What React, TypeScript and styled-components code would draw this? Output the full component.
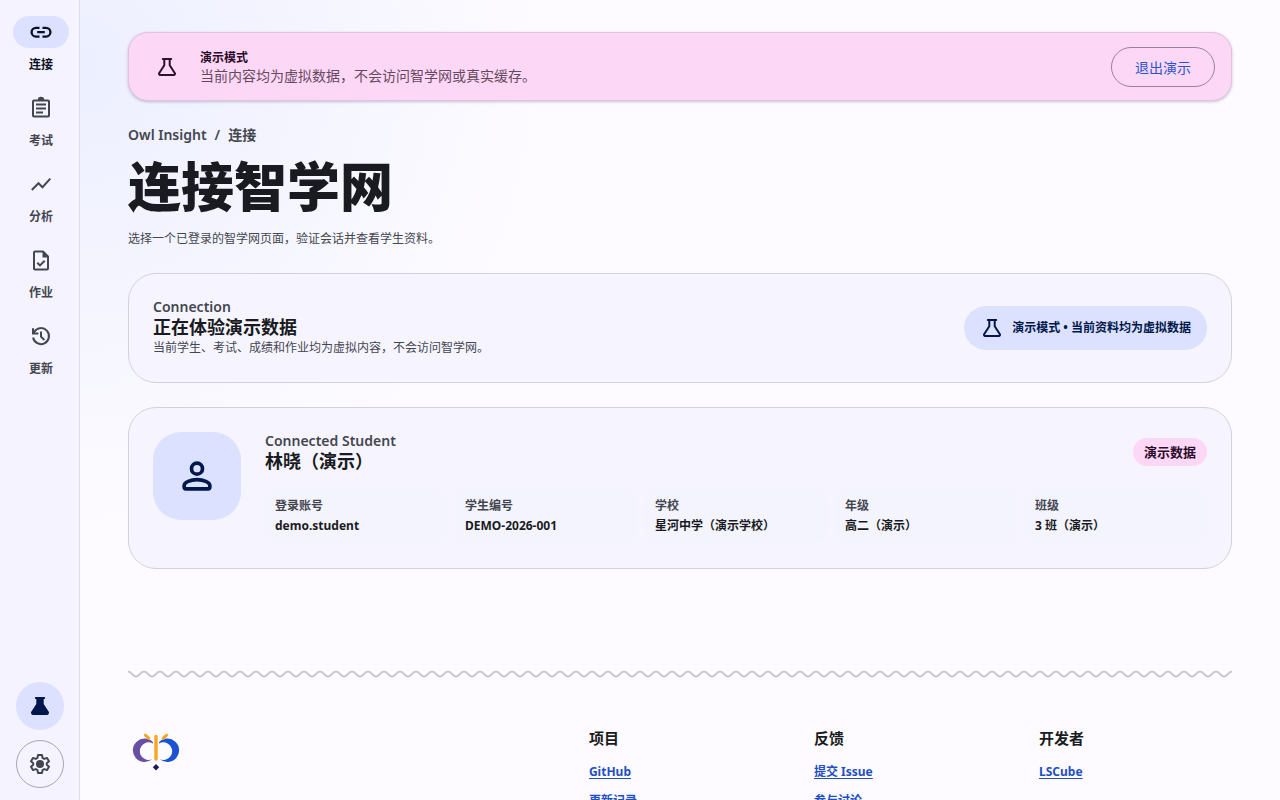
import React from 'react';
import styled, { createGlobalStyle, css } from 'styled-components';

const GlobalStyle = createGlobalStyle`
  *, *::before, *::after { box-sizing: border-box; }
  body {
    margin: 0;
    background: #fdfbff;
    color: #1a1b21;
    font-family: "Noto Sans", "Noto Sans CJK SC", sans-serif;
    font-size: 14px;
    line-height: 20px;
  }
  h1, h2, h3, p, dl, dd, ul { margin: 0; padding: 0; }
  button { font-family: inherit; cursor: pointer; }
`;

const Shell = styled.div`
  display: flex;
  height: 100vh;
  background:
    radial-gradient(circle at 80px 64px, #ecefff 0, rgba(236, 239, 255, 0) 460px),
    #fdfbff;
`;

const Sidebar = styled.aside`
  display: flex;
  flex: none;
  flex-direction: column;
  justify-content: space-between;
  width: 80px;
  padding: 16px 0 12px;
  background: #f4f3ff;
  border-right: 1px solid #dedfee;
`;

const Nav = styled.nav`
  display: flex;
  flex-direction: column;
  gap: 18px;
  padding-left: 13px;
`;

const NavPill = styled.span<{ $active?: boolean }>`
  display: grid;
  place-items: center;
  width: 56px;
  height: 32px;
  border-radius: 16px;
  background: ${(p) => (p.$active ? '#dbe1ff' : 'transparent')};
`;

const NavItem = styled.a<{ $active?: boolean }>`
  display: flex;
  flex-direction: column;
  align-items: center;
  gap: 8px;
  width: 56px;
  color: ${(p) => (p.$active ? '#0c1024' : '#44464f')};
  font-size: 12px;
  font-weight: 700;
  line-height: 18px;
  text-decoration: none;
`;

const Tools = styled.div`
  display: flex;
  flex-direction: column;
  gap: 10px;
  padding-left: 16px;
`;

const RoundButton = styled.button<{ $filled?: boolean }>`
  display: grid;
  place-items: center;
  width: 48px;
  height: 48px;
  padding: 0;
  border-radius: 50%;
  ${(p) =>
    p.$filled
      ? css`
          border: 0;
          background: #dbe1ff;
          color: #00174b;
        `
      : css`
          border: 1px solid #a6a7b2;
          background: transparent;
          color: #44464f;
        `}
`;

const Main = styled.main`
  flex: 1;
  min-width: 0;
  padding: 32px 48px;
  overflow-y: auto;
  scrollbar-width: none;
`;

const Banner = styled.section`
  display: flex;
  align-items: center;
  gap: 21px;
  min-height: 69px;
  padding: 12px 16px 12px 26px;
  background: #fdd8f6;
  border: 1px solid #e0c3df;
  border-radius: 20px;
  box-shadow: 0 1px 3px rgba(40, 30, 70, 0.25);
  color: #2c122b;
`;

const BannerText = styled.div`
  flex: 1;
  font-size: 14px;
  line-height: 18px;
  color: #66485f;
`;

const BannerTitle = styled.strong`
  display: block;
  color: #2c0b2b;
  font-size: 12px;
`;

const ExitButton = styled.button`
  height: 40px;
  padding: 0 23px;
  border: 1px solid #9b7f9f;
  border-radius: 20px;
  background: transparent;
  color: #2b55d0;
  font-size: 14px;
`;

const Crumbs = styled.p`
  display: flex;
  gap: 8px;
  margin-top: 24px;
  color: #44464f;
  font-size: 14px;
  font-weight: 600;
`;

const Title = styled.h1`
  margin-top: 10px;
  font-size: 53px;
  font-weight: 800;
  line-height: 64px;
`;

const Lead = styled.p`
  margin-top: 10px;
  color: #44464f;
  font-size: 12px;
`;

const Card = styled.section`
  display: flex;
  gap: 24px;
  margin-top: 24px;
  padding: 24px;
  background: #f6f5ff;
  border: 1px solid #d2d2de;
  border-radius: 28px;
`;

const StatusCard = styled(Card)`
  align-items: center;
  justify-content: space-between;
`;

const Eyebrow = styled.p`
  color: #44464f;
  font-size: 14px;
  font-weight: 600;
  line-height: 18px;
`;

const CardTitle = styled.h2`
  font-size: 18px;
  line-height: 22px;
`;

const Note = styled.p`
  color: #44464f;
  font-size: 12px;
  line-height: 20px;
`;

const StatusChip = styled.span`
  display: flex;
  align-items: center;
  gap: 8px;
  height: 44px;
  padding: 0 16px;
  border-radius: 22px;
  background: #dbe1ff;
  color: #00174b;
  font-size: 12px;
  font-weight: 700;
`;

const Avatar = styled.div`
  display: grid;
  flex: none;
  place-items: center;
  width: 88px;
  height: 88px;
  border-radius: 28px;
  background: #dbe1ff;
  color: #00174b;
`;

const Profile = styled.div`
  flex: 1;
  min-width: 0;
`;

const ProfileHead = styled.div`
  display: flex;
  align-items: center;
  justify-content: space-between;
`;

const DemoTag = styled.span`
  padding: 4px 11px;
  border-radius: 14px;
  background: #fdd8f6;
  color: #2c0b2b;
  font-size: 13px;
  font-weight: 700;
  line-height: 20px;
`;

const Facts = styled.dl`
  display: grid;
  grid-template-columns: repeat(5, 1fr);
  gap: 8px;
  margin-top: 16px;
`;

const Fact = styled.div`
  padding: 8px 10px;
  border-radius: 16px;
  background: #f4f4ff;
  font-size: 12px;
  font-weight: 700;
  line-height: 20px;
`;

const FactLabel = styled.dt`
  color: #44464f;
`;

const Footer = styled.footer`
  margin-top: 101px;
`;

const Wave = styled.svg`
  display: block;
  width: 100%;
  height: 8px;
`;

const FooterGrid = styled.div`
  display: grid;
  grid-template-columns: 20fr 9fr 9fr 9fr;
  gap: 32px;
  padding-top: 48px;
`;

const FooterHeading = styled.h3`
  font-size: 15px;
  line-height: 24px;
`;

const FooterLinks = styled.ul`
  display: flex;
  flex-direction: column;
  gap: 8px;
  margin-top: 11px;
  list-style: none;
`;

const FooterLink = styled.a`
  color: #1f4fc4;
  font-size: 12px;
  font-weight: 700;
  line-height: 20px;
  text-underline-offset: 2px;
`;

const LogoLink = styled.a`
  display: block;
  width: 56px;
  height: 56px;
`;

type IconProps = { size?: number; children: React.ReactNode; width?: number };

const Icon = ({ size = 24, width = 2, children }: IconProps) => (
  <svg
    width={size}
    height={size}
    viewBox="0 0 24 24"
    fill="none"
    stroke="currentColor"
    strokeWidth={width}
    strokeLinejoin="round"
    aria-hidden="true"
  >
    {children}
  </svg>
);

const LinkIcon = () => (
  <Icon width={2.3}>
    <path d="M10.500 7.800H7a4.400 4.400 0 0 0 0 8.800h3.500M13.500 7.800H17a4.400 4.400 0 0 1 0 8.800h-3.500M8.200 12.200h7.600" />
  </Icon>
);

const ExamIcon = () => (
  <Icon>
    <rect x="4" y="4.500" width="16" height="16" rx="1" />
    <path d="M7 8.500h10M7 12.500h10M7 16.500h7" />
    <path d="M8.800 4a3.200 3.200 0 0 1 6.400 0z" fill="currentColor" stroke="none" />
  </Icon>
);

const TrendIcon = () => (
  <Icon>
    <path d="M2.800 18l6.700-6.800 4 4L21.300 6.600" strokeLinejoin="miter" />
  </Icon>
);

const TaskIcon = () => (
  <Icon>
    <path d="M14 3.500H6a1 1 0 0 0-1 1v16a1 1 0 0 0 1 1h12a1 1 0 0 0 1-1V8.500z" />
    <path d="M13.500 3V9.500h6z" fill="currentColor" stroke="none" />
    <path d="M8.300 14.700l2.700 2.700 4.700-4.700" strokeLinejoin="miter" />
  </Icon>
);

const HistoryIcon = () => (
  <Icon>
    <path
      d="M4.100 13.500a8 8 0 1 0 1.200-5.800L3.600 9.300M4 4.300v5.200h5.400M12 7.600v5l3.400 3.400"
      strokeLinejoin="miter"
    />
  </Icon>
);

const FlaskIcon = ({ filled }: { filled?: boolean }) => (
  <Icon>
    <path
      d="M9.300 4v6.200L4.300 18a1.200 1.200 0 0 0 1 2h13.400a1.200 1.200 0 0 0 1-2l-5-7.800V4"
      fill={filled ? 'currentColor' : 'none'}
    />
    <path d="M7.800 4h8.400" strokeLinecap="round" />
  </Icon>
);

const GearIcon = () => (
  <Icon>
    <path d="M10 3h4l.5 2.900 1.800 1 2.700-1 2 3.400-2.200 1.900v1.600l2.200 1.900-2 3.400-2.700-1-1.800 1L14 21h-4l-.5-2.900-1.800-1-2.700 1-2-3.400 2.200-1.900v-1.600L3 9.300l2-3.400 2.700 1 1.800-1z" />
    <circle cx="12" cy="12" r="4" fill="currentColor" stroke="none" />
  </Icon>
);

const PersonIcon = () => (
  <Icon size={44}>
    <circle cx="12" cy="8" r="3" />
    <path d="M5 17.200c0-1.800 3.500-3.200 7-3.200s7 1.400 7 3.200V18a1 1 0 0 1-1 1H6a1 1 0 0 1-1-1z" />
  </Icon>
);

const OwlLogo = () => (
  <svg width="56" height="56" viewBox="0 0 56 56" role="img" aria-label="Owl Insight">
    <path d="M25 16.200A11.700 11.700 0 1 0 24 33.300A8.800 8.800 0 1 1 25 17.500z" fill="#6750a4" />
    <path d="M31 16.200A11.700 11.700 0 1 1 32 33.300A8.800 8.800 0 1 0 31 17.500z" fill="#1a52d6" />
    <path d="M28 10.500v22.500" stroke="#f5a623" strokeWidth="3.400" strokeLinecap="round" />
    <path
      d="M17.400 9.200l3.400 3.200M38.600 9.200l-3.400 3.200"
      stroke="#f5a623"
      strokeWidth="3"
      strokeLinecap="round"
    />
    <path d="M28 38l3.200 3.200-3.200 3.200-3.200-3.200z" fill="#1d1b58" />
  </svg>
);

const NAV = [
  { label: '连接', icon: <LinkIcon /> },
  { label: '考试', icon: <ExamIcon /> },
  { label: '分析', icon: <TrendIcon /> },
  { label: '作业', icon: <TaskIcon /> },
  { label: '更新', icon: <HistoryIcon /> },
];

const FACTS = [
  ['登录账号', 'demo.student'],
  ['学生编号', 'DEMO-2026-001'],
  ['学校', '星河中学（演示学校）'],
  ['年级', '高二（演示）'],
  ['班级', '3 班（演示）'],
];

const FOOTER = [
  { title: '项目', links: ['GitHub', '更新记录'] },
  { title: '反馈', links: ['提交 Issue', '参与讨论'] },
  { title: '开发者', links: ['LSCube'] },
];

const WaveDivider = () => (
  <Wave aria-hidden="true">
    <defs>
      <pattern id="wave" width="16" height="8" patternUnits="userSpaceOnUse">
        <path
          d="M-8 6.500C-4.500 6.500 -3.500 1.500 0 1.500S4.500 6.500 8 6.500S12.500 1.500 16 1.500S20.500 6.500 24 6.500"
          fill="none"
          stroke="#c9c9d0"
          strokeWidth="2"
        />
      </pattern>
    </defs>
    <rect width="100%" height="8" fill="url(#wave)" />
  </Wave>
);

export default function App() {
  return (
    <>
      <GlobalStyle />
      <Shell>
        <Sidebar>
          <Nav aria-label="主导航">
            {NAV.map((item, i) => (
              <NavItem key={item.label} href="#" $active={i === 0}>
                <NavPill $active={i === 0}>{item.icon}</NavPill>
                {item.label}
              </NavItem>
            ))}
          </Nav>
          <Tools>
            <RoundButton $filled aria-label="演示模式">
              <FlaskIcon filled />
            </RoundButton>
            <RoundButton aria-label="设置">
              <GearIcon />
            </RoundButton>
          </Tools>
        </Sidebar>
        <Main>
          <Banner>
            <FlaskIcon />
            <BannerText>
              <BannerTitle>演示模式</BannerTitle>
              当前内容均为虚拟数据，不会访问智学网或真实缓存。
            </BannerText>
            <ExitButton>退出演示</ExitButton>
          </Banner>

          <Crumbs>
            <span>Owl Insight</span>
            <span>/</span>
            <span>连接</span>
          </Crumbs>
          <Title>连接智学网</Title>
          <Lead>选择一个已登录的智学网页面，验证会话并查看学生资料。</Lead>

          <StatusCard>
            <div>
              <Eyebrow>Connection</Eyebrow>
              <CardTitle>正在体验演示数据</CardTitle>
              <Note>当前学生、考试、成绩和作业均为虚拟内容，不会访问智学网。</Note>
            </div>
            <StatusChip>
              <FlaskIcon />
              演示模式 • 当前资料均为虚拟数据
            </StatusChip>
          </StatusCard>

          <Card>
            <Avatar>
              <PersonIcon />
            </Avatar>
            <Profile>
              <ProfileHead>
                <div>
                  <Eyebrow>Connected Student</Eyebrow>
                  <CardTitle>林晓（演示）</CardTitle>
                </div>
                <DemoTag>演示数据</DemoTag>
              </ProfileHead>
              <Facts>
                {FACTS.map(([label, value]) => (
                  <Fact key={label}>
                    <FactLabel>{label}</FactLabel>
                    <dd>{value}</dd>
                  </Fact>
                ))}
              </Facts>
            </Profile>
          </Card>

          <Footer>
            <WaveDivider />
            <FooterGrid>
              <LogoLink href="#">
                <OwlLogo />
              </LogoLink>
              {FOOTER.map((col) => (
                <div key={col.title}>
                  <FooterHeading>{col.title}</FooterHeading>
                  <FooterLinks>
                    {col.links.map((text) => (
                      <li key={text}>
                        <FooterLink href="#">{text}</FooterLink>
                      </li>
                    ))}
                  </FooterLinks>
                </div>
              ))}
            </FooterGrid>
          </Footer>
        </Main>
      </Shell>
    </>
  );
}
